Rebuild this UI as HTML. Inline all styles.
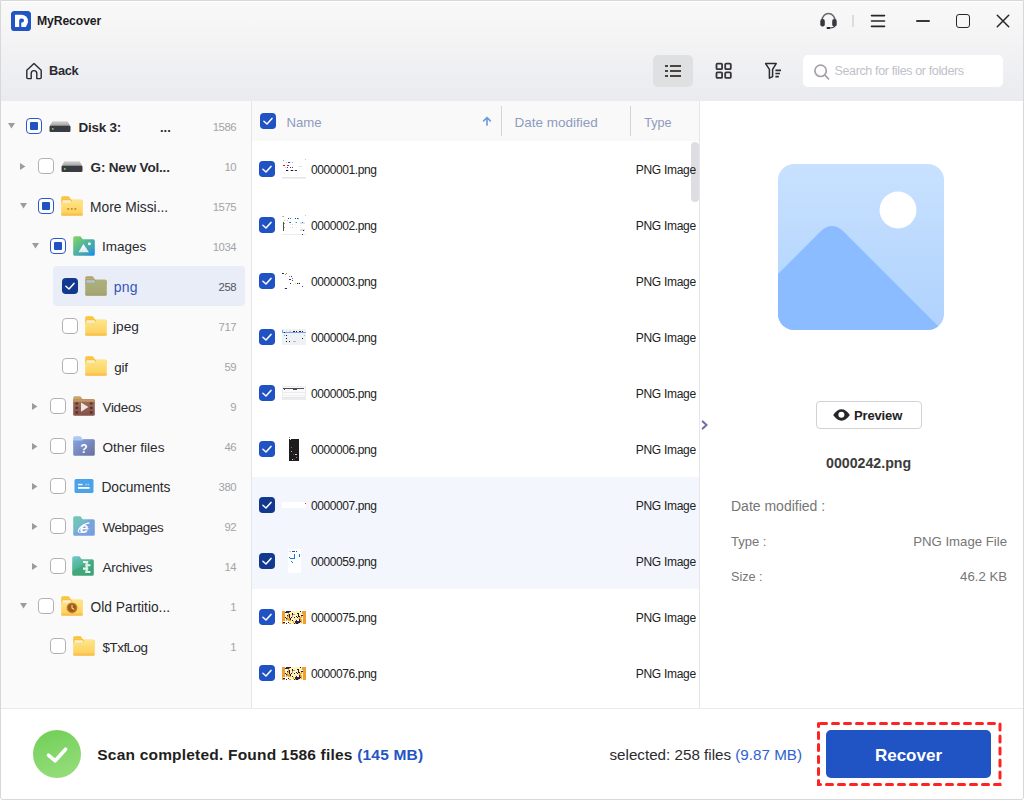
<!DOCTYPE html>
<html><head><meta charset="utf-8"><title>MyRecover</title>
<style>
*{box-sizing:border-box;margin:0;padding:0}
html,body{width:1024px;height:800px;overflow:hidden;background:#fff}
body{font-family:"Liberation Sans",sans-serif;color:#2b2b2b;position:relative}
.abs{position:absolute}
.t{position:absolute;white-space:nowrap;line-height:1}
#hdr{position:absolute;left:0;top:0;width:1024px;height:101px;background:linear-gradient(#f9f9f9 0px,#f4f4f5 35px,#eaebef 101px)}
#left{position:absolute;left:0;top:101px;width:252px;height:608px;background:#fafafa;border-right:1px solid #e6e5ea}
#mid{position:absolute;left:252px;top:101px;width:448px;height:608px;background:#fff;border-right:1px solid #e6e6ea}
#right{position:absolute;left:700px;top:101px;width:324px;height:608px;background:#fff}
#foot{position:absolute;left:0;top:708px;width:1024px;height:92px;background:#fff;border-top:1px solid #eaeaeb}
#win{position:absolute;left:0;top:0;width:1024px;height:800px;border:1px solid #d8d8da;border-radius:0 0 3px 3px;box-shadow:inset 0 1px 0 0 rgba(255,255,255,.9);pointer-events:none}
</style></head><body>
<div id="hdr">
<svg class="abs" style="left:11px;top:11px" width="20" height="20" viewBox="0 0 20 20"><path d="M3 0h14l3 3v14l-3 3H3l-3-3V3z" fill="#2154c5"/><rect width="20" height="20" rx="3.600" fill="#2154c5"/><path d="M4 3.800h6.700a6.200 6.200 0 0 1 6.200 6.200v1.600l-2 4.400H4z" fill="#fff"/><path d="M8.200 9.400a2 2 0 0 1 2-2h.800a2 2 0 0 1 2 2v.200a2 2 0 0 1-2 2h-.700v4.400H8.200z" fill="#2154c5"/></svg>
<div class="t" id="title" style="left:37px;top:14.67px;font-size:12.2px;color:#1c1c24;font-weight:bold;letter-spacing:-0.1px;">MyRecover</div>
<svg class="abs" style="left:25px;top:62px" width="18" height="18" viewBox="0 0 18 18" fill="none" stroke="#2a2a2e" stroke-width="1.400" stroke-linejoin="round"><path d="M1.800 8.200 9 1.600l7.200 6.600v7.400a1 1 0 0 1-1 1h-3.400v-5.200a2.800 2.800 0 0 0-5.600 0v5.200H2.800a1 1 0 0 1-1-1z"/></svg>
<div class="t" id="back" style="left:49px;top:64.76px;font-size:12.8px;color:#2a2a35;font-weight:bold;letter-spacing:-0.35px;">Back</div>
<svg class="abs" style="left:819.500px;top:12.100px" width="17" height="17" viewBox="0 0 17 17"><path d="M2.100 8.600A6.400 7.100 0 0 1 14.900 8.600" fill="none" stroke="#68686e" stroke-width="1.500"/><rect x=".300" y="6.900" width="4.500" height="7.600" rx="2" fill="#38383e"/><rect x="12.200" y="6.900" width="4.500" height="7.600" rx="2" fill="#38383e"/><path d="M14.600 13.800Q14.400 15.900 10 16" fill="none" stroke="#38383e" stroke-width="1.200"/><rect x="6.500" y="15" width="3.800" height="1.900" rx=".95" fill="#26262a"/></svg>
<div class="abs" style="left:852px;top:15px;width:2px;height:12px;background:#dcdcde"></div>
<svg class="abs" style="left:870px;top:14px" width="16" height="14" viewBox="0 0 16 14" stroke="#26262a" stroke-width="1.600" stroke-linecap="round"><path d="M1.500 1.600h13M1.500 7h13M1.500 12.400h13"/></svg>
<div class="abs" style="left:916px;top:19.900px;width:14px;height:1.900px;background:#36363c;border-radius:1px"></div>
<div class="abs" style="left:956px;top:14px;width:14px;height:14px;border:1.600px solid #26262a;border-radius:3px"></div>
<svg class="abs" style="left:996px;top:14px" width="14" height="14" viewBox="0 0 14 14" stroke="#26262a" stroke-width="1.500" stroke-linecap="round"><path d="M1.300 1.300l11.400 11.400M12.700 1.300 1.300 12.700"/></svg>
<div class="abs" style="left:653px;top:55px;width:40px;height:32px;border-radius:5px;background:#dfe0e2"></div>
<svg class="abs" style="left:665px;top:63px" width="18" height="16" viewBox="0 0 18 16" stroke="#48443e" stroke-width="2" shape-rendering="crispEdges"><path d="M0 3h3M5 3H16M0 8h3M5 8H16M0 13h3M5 13H16"/></svg>
<svg class="abs" style="left:714.500px;top:62.300px" width="18" height="18" viewBox="0 0 18 18" fill="none" stroke="#34343a" stroke-width="1.800"><rect x="1.500" y="1.600" width="5.600" height="5.600" rx="1"/><rect x="10.200" y="1.600" width="5.600" height="5.600" rx="1"/><rect x="1.500" y="10.300" width="5.600" height="5.600" rx="1"/><rect x="10.200" y="10.300" width="5.600" height="5.600" rx="1"/></svg>
<svg class="abs" style="left:764px;top:62.300px" width="20" height="18" viewBox="0 0 20 18" fill="none" stroke="#2c2c30" stroke-width="1.500" stroke-linejoin="round"><path d="M1.600 1.600h10.600L8.600 7.400v7.200l-3.200 1.600V7.400z"/><path d="M11.400 8.400h5.600M11.400 11.500h4.600M11.400 14.600h3.400" stroke-width="1.600"/></svg>
<div class="abs" style="left:803px;top:55px;width:200px;height:32px;border-radius:5px;background:#fff"></div>
<svg class="abs" style="left:813px;top:63px" width="18" height="18" viewBox="0 0 18 18" fill="none" stroke="#a99eab" stroke-width="1.700" stroke-linecap="round"><circle cx="7.600" cy="7.800" r="5.700"/><path d="M11.900 12.200l3.600 3.600"/></svg>
<div class="t" id="srch" style="left:834.5px;top:65.02px;font-size:12.5px;color:#c0c1c9;letter-spacing:-0.36px;">Search for files or folders</div>
</div>
<div id="left">
<div class="abs" style="left:53px;top:165px;width:192px;height:40px;border-radius:4px;background:#e8edf7"></div>
<svg class="abs" style="left:7.699999999999999px;top:22.2px" width="7" height="6" viewBox="0 0 7 6"><path d="M0 0h7L3.500 5.600z" fill="#9c9c9c"/></svg>
<div class="abs" style="left:26px;top:17.0px;width:16px;height:16px;border:1.400px solid #2a59c6;border-radius:4px;background:#fff"><div style="position:absolute;left:2.600px;top:2.600px;right:2.600px;bottom:2.600px;background:#2152c4;border-radius:1px"></div></div>
<svg class="abs" style="left:49px;top:20px" width="22" height="12" viewBox="0 0 22 12"><defs><linearGradient id="dk4925" x1="0" y1="0" x2="0" y2="1"><stop offset="0" stop-color="#d6d6d6"/><stop offset="1" stop-color="#9c9c9c"/></linearGradient></defs><path d="M3.400 .2h15.200l2.800 5H.600z" fill="url(#dk4925)"/><rect x=".5" y="4.800" width="21" height="6.200" rx="1.200" fill="#3c3c3e"/><rect x="5.600" y="7.400" width="13" height="1" fill="#34346a" opacity=".8"/><circle cx="3.800" cy="7.900" r=".9" fill="#7be050"/></svg>
<div class="t" id="tl0" style="left:78.6px;top:19.57px;font-size:13.5px;color:#2a2a2e;font-weight:bold;letter-spacing:-0.26px;">Disk 3:</div>
<div class="t" id="tc0" style="right:14.799999999999999px;top:21.33px;font-size:11.3px;color:#a3a3a8;letter-spacing:-0.4px;">1586</div>
<svg class="abs" style="left:20.2px;top:61.5px" width="6" height="7" viewBox="0 0 6 7"><path d="M0 0v7L5.400 3.500z" fill="#9c9c9c"/></svg>
<div class="abs" style="left:38px;top:57.0px;width:16px;height:16px;border:1.200px solid #b3b1b5;border-radius:4px;background:#fff"></div>
<svg class="abs" style="left:61px;top:60px" width="22" height="12" viewBox="0 0 22 12"><defs><linearGradient id="dk6165" x1="0" y1="0" x2="0" y2="1"><stop offset="0" stop-color="#d6d6d6"/><stop offset="1" stop-color="#9c9c9c"/></linearGradient></defs><path d="M3.400 .2h15.200l2.800 5H.600z" fill="url(#dk6165)"/><rect x=".5" y="4.800" width="21" height="6.200" rx="1.200" fill="#3c3c3e"/><rect x="5.600" y="7.400" width="13" height="1" fill="#34346a" opacity=".8"/><circle cx="3.800" cy="7.900" r=".9" fill="#7be050"/></svg>
<div class="t" id="tl1" style="left:90.6px;top:59.57px;font-size:13.5px;color:#2a2a2e;font-weight:bold;letter-spacing:-0.18px;">G: New Vol...</div>
<div class="t" id="tc1" style="right:14.799999999999999px;top:61.33px;font-size:11.3px;color:#a3a3a8;letter-spacing:-0.4px;">10</div>
<svg class="abs" style="left:19.5px;top:102.2px" width="7" height="6" viewBox="0 0 7 6"><path d="M0 0h7L3.500 5.600z" fill="#9c9c9c"/></svg>
<div class="abs" style="left:38px;top:97.0px;width:16px;height:16px;border:1.400px solid #2a59c6;border-radius:4px;background:#fff"><div style="position:absolute;left:2.600px;top:2.600px;right:2.600px;bottom:2.600px;background:#2152c4;border-radius:1px"></div></div>
<svg class="abs" style="left:61px;top:95px" width="22" height="20" viewBox="0 0 22 20"><defs><linearGradient id="fg1" x1="0" y1="0" x2="0" y2="1"><stop offset="0" stop-color="#ffe68c"/><stop offset="1" stop-color="#fbcd55"/></linearGradient></defs><path d="M.2 1.800A1.600 1.600 0 0 1 1.800 .2h5.800l2 2.600H.2z" fill="#fbc12f"/><path d="M.2 2.800h9.400l.9 1h9.700a1.600 1.600 0 0 1 1.600 1.600v3H.2z" fill="#fbc12f"/><rect x="1.400" y="4.200" width="8.400" height="3" rx=".6" fill="#f6efdc"/><path d="M.2 6.400h9.800l1.200-2.600h9a1.600 1.600 0 0 1 1.600 1.600v12.800a1.600 1.600 0 0 1-1.600 1.600H1.800a1.600 1.600 0 0 1-1.600-1.600z" fill="url(#fg1)"/><path d="M.2 18.200a1.600 1.600 0 0 0 1.600 1.600h18.400a1.600 1.600 0 0 0 1.600-1.600v-.6H.2z" fill="#f5b545" opacity=".55"/><rect x="6.200" y="12" width="1.900" height="1.700" rx=".5" fill="#cf8526"/><rect x="9.800" y="12" width="1.900" height="1.700" rx=".5" fill="#cf8526"/><rect x="13.400" y="12" width="1.900" height="1.700" rx=".5" fill="#cf8526"/></svg>
<div class="t" id="tl2" style="left:90px;top:99.82px;font-size:13.8px;color:#2a2a2e;">More Missi...</div>
<div class="t" id="tc2" style="right:14.799999999999999px;top:101.33px;font-size:11.3px;color:#a3a3a8;letter-spacing:-0.4px;">1575</div>
<svg class="abs" style="left:31.700000000000003px;top:142.2px" width="7" height="6" viewBox="0 0 7 6"><path d="M0 0h7L3.500 5.600z" fill="#9c9c9c"/></svg>
<div class="abs" style="left:50px;top:137.0px;width:16px;height:16px;border:1.400px solid #2a59c6;border-radius:4px;background:#fff"><div style="position:absolute;left:2.600px;top:2.600px;right:2.600px;bottom:2.600px;background:#2152c4;border-radius:1px"></div></div>
<svg class="abs" style="left:73px;top:135px" width="22" height="20" viewBox="0 0 22 20"><defs><linearGradient id="gi" x1="0" y1="0" x2="1" y2="1"><stop offset="0" stop-color="#8ad65a"/><stop offset=".45" stop-color="#50b69a"/><stop offset=".75" stop-color="#3fa0b8"/><stop offset=".9" stop-color="#2290ea"/><stop offset="1" stop-color="#1e8cf0"/></linearGradient><linearGradient id="gm" x1="0" y1="0" x2="0" y2="1"><stop offset="0" stop-color="#ffffff"/><stop offset="1" stop-color="#dfe8f4"/></linearGradient></defs><path d="M.200 1.800A1.600 1.600 0 0 1 1.800 .2h5.600l2.300 3h10.500a1.600 1.600 0 0 1 1.600 1.600v13.400a1.600 1.600 0 0 1-1.600 1.600H1.800a1.600 1.600 0 0 1-1.600-1.600z" fill="url(#gi)"/><path d="M5.400 16.200l5-8.200 5.600 8.200z" fill="url(#gm)"/><circle cx="16.400" cy="7.800" r="1.500" fill="#f4fbff"/></svg>
<div class="t" id="tl3" style="left:102px;top:138.87px;font-size:13.5px;color:#2a2a2e;">Images</div>
<div class="t" id="tc3" style="right:14.799999999999999px;top:141.33px;font-size:11.3px;color:#a3a3a8;letter-spacing:-0.4px;">1034</div>
<svg class="abs" style="left:62px;top:177.0px" width="16" height="16" viewBox="0 0 16 16"><rect width="16" height="16" rx="3.800" fill="#12398f"/><path d="M3.900 8.300l3.100 2.700 5-5.600" fill="none" stroke="#fff" stroke-width="1.500" stroke-linecap="round" stroke-linejoin="round"/></svg>
<svg class="abs" style="left:85px;top:175px" width="22" height="20" viewBox="0 0 22 20"><defs><linearGradient id="fg2" x1="0" y1="0" x2="0" y2="1"><stop offset="0" stop-color="#aeb07c"/><stop offset="1" stop-color="#a3a574"/></linearGradient></defs><path d="M.2 1.800A1.600 1.600 0 0 1 1.800 .2h5.800l2 2.600H.2z" fill="#b59f6c"/><path d="M.2 2.800h9.400l.9 1h9.700a1.600 1.600 0 0 1 1.600 1.600v3H.2z" fill="#b59f6c"/><rect x="1.400" y="4.200" width="8.400" height="3" rx=".6" fill="#a9c8e6"/><path d="M.2 6.400h9.800l1.200-2.600h9a1.600 1.600 0 0 1 1.600 1.600v12.800a1.600 1.600 0 0 1-1.600 1.600H1.800a1.600 1.600 0 0 1-1.600-1.600z" fill="url(#fg2)"/><path d="M.2 18.200a1.600 1.600 0 0 0 1.600 1.600h18.400a1.600 1.600 0 0 0 1.600-1.600v-.6H.2z" fill="#a89a6c" opacity=".55"/></svg>
<div class="t" id="tl4" style="left:113.7px;top:178.65px;font-size:14px;color:#3457b9;letter-spacing:0.2px;">png</div>
<div class="t" id="tc4" style="right:14.799999999999999px;top:181.33px;font-size:11.3px;color:#55565c;letter-spacing:-0.4px;">258</div>
<div class="abs" style="left:62px;top:217.0px;width:16px;height:16px;border:1.200px solid #b3b1b5;border-radius:4px;background:#fff"></div>
<svg class="abs" style="left:85px;top:215px" width="22" height="20" viewBox="0 0 22 20"><defs><linearGradient id="fg3" x1="0" y1="0" x2="0" y2="1"><stop offset="0" stop-color="#ffe68c"/><stop offset="1" stop-color="#fbcd55"/></linearGradient></defs><path d="M.2 1.800A1.600 1.600 0 0 1 1.800 .2h5.800l2 2.600H.2z" fill="#fbc12f"/><path d="M.2 2.800h9.400l.9 1h9.700a1.600 1.600 0 0 1 1.600 1.600v3H.2z" fill="#fbc12f"/><rect x="1.400" y="4.200" width="8.400" height="3" rx=".6" fill="#f6efdc"/><path d="M.2 6.400h9.800l1.200-2.600h9a1.600 1.600 0 0 1 1.600 1.600v12.800a1.600 1.600 0 0 1-1.600 1.600H1.800a1.600 1.600 0 0 1-1.600-1.600z" fill="url(#fg3)"/><path d="M.2 18.200a1.600 1.600 0 0 0 1.600 1.600h18.400a1.600 1.600 0 0 0 1.600-1.600v-.6H.2z" fill="#f5b545" opacity=".55"/></svg>
<div class="t" id="tl5" style="left:113px;top:218.90px;font-size:13.7px;color:#2a2a2e;">jpeg</div>
<div class="t" id="tc5" style="right:14.799999999999999px;top:221.33px;font-size:11.3px;color:#a3a3a8;letter-spacing:-0.4px;">717</div>
<div class="abs" style="left:62px;top:257.0px;width:16px;height:16px;border:1.200px solid #b3b1b5;border-radius:4px;background:#fff"></div>
<svg class="abs" style="left:85px;top:255px" width="22" height="20" viewBox="0 0 22 20"><defs><linearGradient id="fg4" x1="0" y1="0" x2="0" y2="1"><stop offset="0" stop-color="#ffe68c"/><stop offset="1" stop-color="#fbcd55"/></linearGradient></defs><path d="M.2 1.800A1.600 1.600 0 0 1 1.800 .2h5.800l2 2.600H.2z" fill="#fbc12f"/><path d="M.2 2.800h9.400l.9 1h9.700a1.600 1.600 0 0 1 1.600 1.600v3H.2z" fill="#fbc12f"/><rect x="1.400" y="4.200" width="8.400" height="3" rx=".6" fill="#f6efdc"/><path d="M.2 6.400h9.800l1.200-2.600h9a1.600 1.600 0 0 1 1.600 1.600v12.800a1.600 1.600 0 0 1-1.600 1.600H1.800a1.600 1.600 0 0 1-1.600-1.600z" fill="url(#fg4)"/><path d="M.2 18.200a1.600 1.600 0 0 0 1.600 1.600h18.400a1.600 1.600 0 0 0 1.600-1.600v-.6H.2z" fill="#f5b545" opacity=".55"/></svg>
<div class="t" id="tl6" style="left:114.3px;top:260.16px;font-size:13.4px;color:#2a2a2e;letter-spacing:-0.2px;">gif</div>
<div class="t" id="tc6" style="right:14.799999999999999px;top:261.33px;font-size:11.3px;color:#a3a3a8;letter-spacing:-0.4px;">59</div>
<svg class="abs" style="left:32.3px;top:301.5px" width="6" height="7" viewBox="0 0 6 7"><path d="M0 0v7L5.400 3.500z" fill="#9c9c9c"/></svg>
<div class="abs" style="left:50px;top:297.0px;width:16px;height:16px;border:1.200px solid #b3b1b5;border-radius:4px;background:#fff"></div>
<svg class="abs" style="left:73px;top:295px" width="22" height="20" viewBox="0 0 22 20"><defs><linearGradient id="gv" x1="0" y1="0" x2="0" y2="1"><stop offset="0" stop-color="#a3705c"/><stop offset="1" stop-color="#84504a"/></linearGradient></defs><path d="M.200 1.800A1.600 1.600 0 0 1 1.800 .2h5.600l2.300 3h10.500a1.600 1.600 0 0 1 1.600 1.600v4H.2z" fill="#c8a668"/><rect x=".2" y="3.200" width="21.600" height="16.600" rx="1.600" fill="url(#gv)"/><path d="M.2 3.200h20a1.600 1.600 0 0 1 1.600 1.600v1H.2z" fill="#c09a64"/><path d="M2.400 6.400h2.800v2.200H2.400zM2.400 10.800h2.800V13H2.400zM2.400 15.200h2.800v2.200H2.400zM16.800 6.400h2.800v2.200h-2.800zM16.800 10.800h2.800V13h-2.800zM16.800 15.200h2.800v2.200h-2.800z" fill="#53352f"/><path d="M8 6.400v9.400l7.400-4.700z" fill="#efe6e0"/></svg>
<div class="t" id="tl7" style="left:102.5px;top:300.16px;font-size:13.4px;color:#2a2a2e;letter-spacing:-0.28px;">Videos</div>
<div class="t" id="tc7" style="right:14.799999999999999px;top:301.33px;font-size:11.3px;color:#a3a3a8;letter-spacing:-0.4px;">9</div>
<svg class="abs" style="left:32.3px;top:341.5px" width="6" height="7" viewBox="0 0 6 7"><path d="M0 0v7L5.400 3.500z" fill="#9c9c9c"/></svg>
<div class="abs" style="left:50px;top:337.0px;width:16px;height:16px;border:1.200px solid #b3b1b5;border-radius:4px;background:#fff"></div>
<svg class="abs" style="left:73px;top:335px" width="22" height="20" viewBox="0 0 22 20"><defs><linearGradient id="go" x1="0" y1="0" x2="1" y2="1"><stop offset="0" stop-color="#86a6e0"/><stop offset=".55" stop-color="#7686bd"/><stop offset="1" stop-color="#6b6f9c"/></linearGradient></defs><path d="M.200 1.800A1.600 1.600 0 0 1 1.800 .2h5.600l2.300 3h10.500a1.600 1.600 0 0 1 1.600 1.600v4H.2z" fill="#a9c8f2"/><path d="M.2 4.400h9.200l1-1.200h9.800a1.600 1.600 0 0 1 1.600 1.600v13.400a1.600 1.600 0 0 1-1.600 1.600H1.800a1.600 1.600 0 0 1-1.600-1.600z" fill="url(#go)"/><text x="11" y="16.600" font-family="Liberation Sans" font-weight="bold" font-size="12" fill="#fff" text-anchor="middle">?</text></svg>
<div class="t" id="tl8" style="left:102.5px;top:339.99px;font-size:13.6px;color:#2a2a2e;">Other files</div>
<div class="t" id="tc8" style="right:14.799999999999999px;top:341.33px;font-size:11.3px;color:#a3a3a8;letter-spacing:-0.4px;">46</div>
<svg class="abs" style="left:32.3px;top:381.5px" width="6" height="7" viewBox="0 0 6 7"><path d="M0 0v7L5.400 3.500z" fill="#9c9c9c"/></svg>
<div class="abs" style="left:50px;top:377.0px;width:16px;height:16px;border:1.200px solid #b3b1b5;border-radius:4px;background:#fff"></div>
<svg class="abs" style="left:73px;top:375px" width="22" height="20" viewBox="0 0 22 20"><rect x="1.500" y="3" width="19" height="14" rx="1.600" fill="#49a2ea"/><rect x="5" y="7.800" width="4.600" height="1.500" fill="#eef7ff"/><rect x="12.400" y="7.800" width="1.200" height="1.500" fill="#bfe0fb"/><rect x="14.600" y="7.800" width="1.200" height="1.500" fill="#bfe0fb"/><rect x="5" y="11" width="11.600" height="1.800" fill="#fff"/></svg>
<div class="t" id="tl9" style="left:101.5px;top:379.82px;font-size:13.8px;color:#2a2a2e;letter-spacing:-0.1px;">Documents</div>
<div class="t" id="tc9" style="right:14.799999999999999px;top:381.33px;font-size:11.3px;color:#a3a3a8;letter-spacing:-0.4px;">380</div>
<svg class="abs" style="left:32.3px;top:421.5px" width="6" height="7" viewBox="0 0 6 7"><path d="M0 0v7L5.400 3.500z" fill="#9c9c9c"/></svg>
<div class="abs" style="left:50px;top:417.0px;width:16px;height:16px;border:1.200px solid #b3b1b5;border-radius:4px;background:#fff"></div>
<svg class="abs" style="left:73px;top:415px" width="22" height="20" viewBox="0 0 22 20"><defs><linearGradient id="gw" x1="0" y1="0" x2="1" y2="1"><stop offset="0" stop-color="#6fc9b6"/><stop offset=".38" stop-color="#74bcc4"/><stop offset=".5" stop-color="#7aa4dc"/><stop offset="1" stop-color="#769ee0"/></linearGradient></defs><path d="M.200 1.800A1.600 1.600 0 0 1 1.800 .2h5.600l2.300 3h10.500a1.600 1.600 0 0 1 1.600 1.600v13.400a1.600 1.600 0 0 1-1.600 1.600H1.800a1.600 1.600 0 0 1-1.600-1.600z" fill="url(#gw)"/><text x="10.800" y="16.600" font-family="Liberation Sans" font-style="italic" font-weight="bold" font-size="15" fill="#fff" text-anchor="middle">e</text><path d="M5.600 16.200c-1.800-1.600 3.600-8.600 10.800-9.400" stroke="#fff" stroke-width="1.200" fill="none"/><path d="M6 16.400c2 1 7.600-.6 10-4" stroke="#fff" stroke-width=".9" fill="none" opacity=".8"/></svg>
<div class="t" id="tl10" style="left:102.5px;top:420.16px;font-size:13.4px;color:#2a2a2e;letter-spacing:-0.37px;">Webpages</div>
<div class="t" id="tc10" style="right:14.799999999999999px;top:421.33px;font-size:11.3px;color:#a3a3a8;letter-spacing:-0.4px;">92</div>
<svg class="abs" style="left:32.3px;top:461.5px" width="6" height="7" viewBox="0 0 6 7"><path d="M0 0v7L5.400 3.500z" fill="#9c9c9c"/></svg>
<div class="abs" style="left:50px;top:457.0px;width:16px;height:16px;border:1.200px solid #b3b1b5;border-radius:4px;background:#fff"></div>
<svg class="abs" style="left:72px;top:455px" width="22" height="20" viewBox="0 0 22 20"><defs><linearGradient id="ga" x1="0" y1="0" x2=".6" y2="1"><stop offset="0" stop-color="#78c8dc"/><stop offset=".3" stop-color="#5cbcaa"/><stop offset=".55" stop-color="#4eb692"/><stop offset=".56" stop-color="#44aa7e"/><stop offset="1" stop-color="#3ea477"/></linearGradient></defs><path d="M.200 1.800A1.600 1.600 0 0 1 1.800 .2h5.600l2.300 3h10.500a1.600 1.600 0 0 1 1.600 1.600v13.400a1.600 1.600 0 0 1-1.600 1.600H1.800a1.600 1.600 0 0 1-1.600-1.600z" fill="url(#ga)"/><path d="M11 4.900h5.200v2h-5.200zM13.400 8.200h5v2.100h-5zM11 11.600h5.200v2.100h-5.200zM13.400 15h5v2.100h-5z" fill="#f2f8f5"/><rect x="13.600" y="5" width="2.200" height="12" fill="#d8efe6"/></svg>
<div class="t" id="tl11" style="left:102.5px;top:460.16px;font-size:13.4px;color:#2a2a2e;letter-spacing:-0.2px;">Archives</div>
<div class="t" id="tc11" style="right:14.799999999999999px;top:461.33px;font-size:11.3px;color:#a3a3a8;letter-spacing:-0.4px;">14</div>
<svg class="abs" style="left:19.5px;top:502.2px" width="7" height="6" viewBox="0 0 7 6"><path d="M0 0h7L3.500 5.600z" fill="#9c9c9c"/></svg>
<div class="abs" style="left:38px;top:497.0px;width:16px;height:16px;border:1.200px solid #b3b1b5;border-radius:4px;background:#fff"></div>
<svg class="abs" style="left:61px;top:495px" width="22" height="20" viewBox="0 0 22 20"><defs><linearGradient id="fg5" x1="0" y1="0" x2="0" y2="1"><stop offset="0" stop-color="#ffe68c"/><stop offset="1" stop-color="#fbcd55"/></linearGradient></defs><path d="M.2 1.800A1.600 1.600 0 0 1 1.800 .2h5.800l2 2.600H.2z" fill="#fbc12f"/><path d="M.2 2.800h9.400l.9 1h9.700a1.600 1.600 0 0 1 1.600 1.600v3H.2z" fill="#fbc12f"/><rect x="1.400" y="4.200" width="8.400" height="3" rx=".6" fill="#f6efdc"/><path d="M.2 6.400h9.800l1.200-2.600h9a1.600 1.600 0 0 1 1.600 1.600v12.800a1.600 1.600 0 0 1-1.600 1.600H1.800a1.600 1.600 0 0 1-1.600-1.600z" fill="url(#fg5)"/><path d="M.2 18.200a1.600 1.600 0 0 0 1.600 1.600h18.400a1.600 1.600 0 0 0 1.600-1.600v-.6H.2z" fill="#f5b545" opacity=".55"/><circle cx="11" cy="11.800" r="5.400" fill="#c07a2c"/><circle cx="11" cy="11.800" r="3.900" fill="#9a5a1c"/><path d="M11 9.300v2.700l1.800 1.200" stroke="#ffd978" stroke-width="1.200" fill="none" stroke-linecap="round"/></svg>
<div class="t" id="tl12" style="left:90.6px;top:499.86px;font-size:13.75px;color:#2a2a2e;">Old Partitio...</div>
<div class="t" id="tc12" style="right:14.799999999999999px;top:501.33px;font-size:11.3px;color:#a3a3a8;letter-spacing:-0.4px;">1</div>
<div class="abs" style="left:50px;top:537.0px;width:16px;height:16px;border:1.200px solid #b3b1b5;border-radius:4px;background:#fff"></div>
<svg class="abs" style="left:73px;top:535px" width="22" height="20" viewBox="0 0 22 20"><defs><linearGradient id="fg6" x1="0" y1="0" x2="0" y2="1"><stop offset="0" stop-color="#ffe68c"/><stop offset="1" stop-color="#fbcd55"/></linearGradient></defs><path d="M.2 1.800A1.600 1.600 0 0 1 1.800 .2h5.800l2 2.600H.2z" fill="#fbc12f"/><path d="M.2 2.800h9.400l.9 1h9.700a1.600 1.600 0 0 1 1.600 1.600v3H.2z" fill="#fbc12f"/><rect x="1.400" y="4.200" width="8.400" height="3" rx=".6" fill="#f6efdc"/><path d="M.2 6.400h9.800l1.200-2.600h9a1.600 1.600 0 0 1 1.600 1.600v12.800a1.600 1.600 0 0 1-1.600 1.600H1.800a1.600 1.600 0 0 1-1.600-1.600z" fill="url(#fg6)"/><path d="M.2 18.200a1.600 1.600 0 0 0 1.600 1.600h18.400a1.600 1.600 0 0 0 1.600-1.600v-.6H.2z" fill="#f5b545" opacity=".55"/></svg>
<div class="t" id="tl13" style="left:102.5px;top:540.16px;font-size:13.4px;color:#2a2a2e;letter-spacing:-0.48px;">$TxfLog</div>
<div class="t" id="tc13" style="right:14.799999999999999px;top:541.33px;font-size:11.3px;color:#a3a3a8;letter-spacing:-0.4px;">1</div>
<div class="t" id="dots" style="left:160px;top:20.00px;font-size:13px;color:#2a2a2e;font-weight:bold;">...</div>
</div>
<div id="mid">
<div class="abs" style="left:0;top:0;width:447px;height:40px;background:#f9f9fa"></div>
<div class="abs" style="left:0;top:376px;width:447px;height:112px;background:#f3f6fd"></div>
<svg class="abs" style="left:8px;top:12.0px" width="16" height="16" viewBox="0 0 16 16"><rect width="16" height="16" rx="3.800" fill="#2152c4"/><path d="M3.900 8.300l3.100 2.700 5-5.600" fill="none" stroke="#fff" stroke-width="1.500" stroke-linecap="round" stroke-linejoin="round"/></svg>
<div class="t" id="hname" style="left:34.5px;top:14.83px;font-size:13.2px;color:#8f9bbd;">Name</div>
<svg class="abs" style="left:230px;top:15px" width="10" height="11" viewBox="0 0 10 11" fill="none" stroke="#6f9de0" stroke-width="1.700" stroke-linecap="round" stroke-linejoin="round"><path d="M5 9V1.800M1.700 4.800 5 1.500l3.300 3.300"/></svg>
<div class="abs" style="left:249px;top:5px;width:1px;height:30px;background:#d3d3d8"></div>
<div class="t" id="hdate" style="left:262.4px;top:14.57px;font-size:13.5px;color:#8f9bbd;">Date modified</div>
<div class="abs" style="left:378px;top:5px;width:1px;height:30px;background:#d3d3d8"></div>
<div class="t" id="htype" style="left:392.29999999999995px;top:15.93px;font-size:12.6px;color:#8f9bbd;">Type</div>
<div class="abs" style="left:439px;top:41px;width:8px;height:59.500px;border-radius:4px;background:#dedee2"></div>
<svg class="abs" style="left:7px;top:60.0px" width="16" height="16" viewBox="0 0 16 16"><rect width="16" height="16" rx="3.800" fill="#2152c4"/><path d="M3.900 8.300l3.100 2.700 5-5.600" fill="none" stroke="#fff" stroke-width="1.500" stroke-linecap="round" stroke-linejoin="round"/></svg>
<svg class="abs" style="left:30px;top:57px" width="24" height="22" viewBox="0 0 24 22" shape-rendering="crispEdges"><rect x="1" y="2" width="1" height="1" fill="#80d040"/><rect x="23" y="1" width="1" height="1" fill="#c8c8c8"/><rect x="4" y="4" width="1" height="1" fill="#ffc8c8"/><rect x="5.5" y="4" width="2" height="1" fill="#2050d0"/><rect x="8" y="4" width="1" height="1" fill="#c0f0ff"/><rect x="10" y="4" width="1" height="1" fill="#b0a0d0"/><rect x="1" y="7" width="2" height="1" fill="#ff1010"/><rect x="5" y="7" width="2" height="1" fill="#ff1010"/><rect x="17" y="8" width="3" height="1" fill="#e2e2e2"/><rect x="3" y="9" width="1" height="1" fill="#a0d8ff"/><rect x="5" y="9" width="1" height="1" fill="#303090"/><rect x="8" y="9" width="1" height="1" fill="#602020"/><rect x="10" y="9" width="1" height="1" fill="#3050a0"/><rect x="4" y="12" width="2" height="1" fill="#181818"/><rect x="6" y="12" width="1" height="1" fill="#ffc080"/><rect x="8" y="12" width="1" height="1" fill="#a0e0ff"/><rect x="9" y="12" width="2" height="1" fill="#181818"/><rect x="11" y="12" width="1" height="1" fill="#a0e0ff"/><rect x="12" y="12" width="1" height="1" fill="#ffc080"/><rect x="13" y="12" width="1.5" height="1" fill="#303080"/><rect x="0" y="19" width="24" height="1" fill="#e6e6e8"/><rect x="0" y="20" width="24" height="1" fill="#f0f0f2"/></svg>
<div class="t" id="fn0" style="left:59px;top:63.04px;font-size:12px;color:#222;letter-spacing:-0.42px;">0000001.png</div>
<div class="t" id="ft0" style="left:383.79999999999995px;top:63.04px;font-size:12px;color:#222;letter-spacing:-0.3px;width:61.400px;overflow:hidden;padding-bottom:4px;">PNG Image File</div>
<svg class="abs" style="left:7px;top:116.0px" width="16" height="16" viewBox="0 0 16 16"><rect width="16" height="16" rx="3.800" fill="#2152c4"/><path d="M3.900 8.300l3.100 2.700 5-5.600" fill="none" stroke="#fff" stroke-width="1.500" stroke-linecap="round" stroke-linejoin="round"/></svg>
<svg class="abs" style="left:30px;top:113px" width="24" height="22" viewBox="0 0 24 22" shape-rendering="crispEdges"><rect x="0" y="2" width="1" height="1" fill="#d0c0d8"/><rect x="1" y="2" width="1" height="1" fill="#70d040"/><rect x="23" y="1" width="1" height="1" fill="#c8c8c8"/><rect x="6" y="4" width="1" height="1" fill="#283890"/><rect x="8" y="4" width="1" height="1" fill="#2080e8"/><rect x="10" y="4" width="1" height="1" fill="#ffe0c8"/><rect x="13" y="4" width="1" height="1" fill="#283890"/><rect x="15" y="4" width="1" height="1" fill="#1850c0"/><rect x="16" y="4" width="1" height="1" fill="#60a8f8"/><rect x="2" y="6" width="1" height="1" fill="#a0d8ff"/><rect x="3" y="6" width="1" height="1" fill="#ffe8d0"/><rect x="5" y="6" width="1" height="1" fill="#a0d8ff"/><rect x="1" y="8" width="1" height="9" fill="#505058"/><rect x="2" y="9" width="1" height="1" fill="#e08820"/><rect x="2" y="13" width="1" height="1" fill="#f0a030"/><rect x="7" y="8" width="1" height="1" fill="#3090f0"/><rect x="8" y="8" width="1" height="1" fill="#905060"/><rect x="13" y="8" width="1" height="1" fill="#a0f0e0"/><rect x="14" y="8" width="1" height="1" fill="#30b080"/><rect x="18" y="8" width="5" height="2" fill="#e6e6ea"/><rect x="20" y="8" width="1" height="1" fill="#3070d0"/><rect x="7" y="10" width="1" height="1" fill="#fff4c0"/><rect x="10" y="10" width="1" height="1" fill="#d4d4d4"/><rect x="13" y="10" width="1" height="1" fill="#fff4c0"/><rect x="8" y="13" width="1" height="1" fill="#d8e4ff"/><rect x="10" y="13" width="1" height="1" fill="#d4d4d4"/><rect x="14" y="13" width="1" height="1" fill="#d8e4ff"/><rect x="18" y="15" width="5" height="2" fill="#e2e2e2"/><rect x="19" y="16" width="1" height="1" fill="#ffd8a0"/><rect x="21" y="16" width="1" height="1" fill="#202020"/><rect x="0" y="20" width="24" height="1" fill="#ececf0"/><rect x="20" y="20" width="1" height="1" fill="#802080"/></svg>
<div class="t" id="fn1" style="left:59px;top:119.04px;font-size:12px;color:#222;letter-spacing:-0.42px;">0000002.png</div>
<div class="t" id="ft1" style="left:383.79999999999995px;top:119.04px;font-size:12px;color:#222;letter-spacing:-0.3px;width:61.400px;overflow:hidden;padding-bottom:4px;">PNG Image File</div>
<svg class="abs" style="left:7px;top:172.0px" width="16" height="16" viewBox="0 0 16 16"><rect width="16" height="16" rx="3.800" fill="#2152c4"/><path d="M3.900 8.300l3.100 2.700 5-5.600" fill="none" stroke="#fff" stroke-width="1.500" stroke-linecap="round" stroke-linejoin="round"/></svg>
<svg class="abs" style="left:30px;top:169px" width="24" height="22" viewBox="0 0 24 22" shape-rendering="crispEdges"><rect x="0" y="3" width="2" height="1" fill="#303030"/><rect x="3" y="4" width="1" height="1" fill="#909090"/><rect x="4" y="3" width="1" height="1" fill="#d08020"/><rect x="7" y="6" width="1" height="1" fill="#b08890"/><rect x="9" y="6" width="1" height="1" fill="#1040b0"/><rect x="10" y="8" width="1" height="1" fill="#2090f0"/><rect x="7" y="9" width="1.5" height="1" fill="#404040"/><rect x="10" y="10" width="1" height="1" fill="#804040"/><rect x="8" y="13" width="1" height="1" fill="#302080"/><rect x="11" y="14" width="1" height="1" fill="#ffe0c8"/><rect x="13" y="13" width="1" height="1" fill="#ffd080"/><rect x="15" y="13" width="1" height="1" fill="#181818"/><rect x="16" y="13" width="1" height="1" fill="#ffd080"/><rect x="17" y="13" width="1" height="1" fill="#181818"/><rect x="17" y="16" width="1" height="1" fill="#d8f8ff"/><rect x="20" y="16" width="1" height="1" fill="#2050d0"/><rect x="2" y="18" width="1" height="1" fill="#ffd890"/><rect x="3" y="18" width="1.5" height="1" fill="#302070"/></svg>
<div class="t" id="fn2" style="left:59px;top:175.04px;font-size:12px;color:#222;letter-spacing:-0.42px;">0000003.png</div>
<div class="t" id="ft2" style="left:383.79999999999995px;top:175.04px;font-size:12px;color:#222;letter-spacing:-0.3px;width:61.400px;overflow:hidden;padding-bottom:4px;">PNG Image File</div>
<svg class="abs" style="left:7px;top:228.0px" width="16" height="16" viewBox="0 0 16 16"><rect width="16" height="16" rx="3.800" fill="#2152c4"/><path d="M3.900 8.300l3.100 2.700 5-5.600" fill="none" stroke="#fff" stroke-width="1.500" stroke-linecap="round" stroke-linejoin="round"/></svg>
<svg class="abs" style="left:30px;top:228px" width="24" height="16" viewBox="0 0 24 16" shape-rendering="crispEdges"><rect x="0" y="0" width="24" height="16" fill="#eef1f6"/><rect x="0" y="1" width="1" height="3" fill="#70a0e8"/><rect x="0" y="3" width="24" height="1" fill="#78a6ea"/><rect x="2" y="3" width="1" height="1" fill="#202060"/><rect x="4" y="2" width="1" height="1" fill="#c8c8c8"/><rect x="7" y="2" width="2" height="1" fill="#c8c8c8"/><rect x="11" y="2" width="2" height="1" fill="#202020"/><rect x="14" y="2" width="1" height="1" fill="#202020"/><rect x="16.5" y="2" width="2" height="1" fill="#202050"/><rect x="20" y="2" width="1" height="1" fill="#202020"/><rect x="2" y="6" width="1" height="1" fill="#a0a0a0"/><rect x="4" y="6" width="1" height="1" fill="#181818"/><rect x="22" y="6" width="1" height="1" fill="#c0c0c0"/><rect x="4" y="9" width="1" height="1" fill="#181818"/><rect x="18" y="9" width="1" height="1" fill="#fff8b0"/><rect x="20" y="9" width="1" height="1" fill="#181818"/><rect x="4" y="12" width="1" height="1" fill="#181818"/><rect x="7" y="12" width="1" height="1" fill="#181818"/><rect x="11" y="12" width="2.5" height="1" fill="#b8b8b8"/></svg>
<div class="t" id="fn3" style="left:59px;top:231.04px;font-size:12px;color:#222;letter-spacing:-0.42px;">0000004.png</div>
<div class="t" id="ft3" style="left:383.79999999999995px;top:231.04px;font-size:12px;color:#222;letter-spacing:-0.3px;width:61.400px;overflow:hidden;padding-bottom:4px;">PNG Image File</div>
<svg class="abs" style="left:7px;top:284.0px" width="16" height="16" viewBox="0 0 16 16"><rect width="16" height="16" rx="3.800" fill="#2152c4"/><path d="M3.900 8.300l3.100 2.700 5-5.600" fill="none" stroke="#fff" stroke-width="1.500" stroke-linecap="round" stroke-linejoin="round"/></svg>
<svg class="abs" style="left:30px;top:285px" width="24" height="14" viewBox="0 0 24 14" shape-rendering="crispEdges"><rect x="0" y="0" width="24" height="14" fill="#ececee"/><rect x="1" y="1" width="22" height="10" fill="#fafafa"/><rect x="1" y="2" width="21" height="1" fill="#505050"/><rect x="2" y="3" width="1" height="1" fill="#404040"/><rect x="11" y="3" width="4" height="1" fill="#484848"/><rect x="1" y="6" width="22" height="1" fill="#ececee"/><rect x="1" y="8.5" width="22" height="1" fill="#f0f0f2"/><rect x="1" y="10.5" width="22" height="1" fill="#e6e6ea"/></svg>
<div class="t" id="fn4" style="left:59px;top:287.04px;font-size:12px;color:#222;letter-spacing:-0.42px;">0000005.png</div>
<div class="t" id="ft4" style="left:383.79999999999995px;top:287.04px;font-size:12px;color:#222;letter-spacing:-0.3px;width:61.400px;overflow:hidden;padding-bottom:4px;">PNG Image File</div>
<svg class="abs" style="left:7px;top:340.0px" width="16" height="16" viewBox="0 0 16 16"><rect width="16" height="16" rx="3.800" fill="#2152c4"/><path d="M3.900 8.300l3.100 2.700 5-5.600" fill="none" stroke="#fff" stroke-width="1.500" stroke-linecap="round" stroke-linejoin="round"/></svg>
<svg class="abs" style="left:37px;top:336px" width="10" height="24" viewBox="0 0 10 24" shape-rendering="crispEdges"><rect x="0" y="2" width="10" height="22" fill="#1e1c1d"/><rect x="0" y="0" width="1" height="1" fill="#4090e0"/><rect x="1" y="2" width="1" height="1" fill="#e0e0e0"/><rect x="2" y="10" width="1" height="1" fill="#707070"/><rect x="2" y="14" width="1" height="1" fill="#c0b0d0"/><rect x="4" y="17" width="1" height="1" fill="#606060"/><rect x="6" y="17" width="2" height="1" fill="#d0c8e0"/><rect x="7" y="20" width="1" height="1" fill="#909090"/><rect x="3" y="22" width="1" height="1" fill="#d0d0d0"/><rect x="5" y="22" width="1" height="1" fill="#f01010"/></svg>
<div class="t" id="fn5" style="left:59px;top:343.04px;font-size:12px;color:#222;letter-spacing:-0.42px;">0000006.png</div>
<div class="t" id="ft5" style="left:383.79999999999995px;top:343.04px;font-size:12px;color:#222;letter-spacing:-0.3px;width:61.400px;overflow:hidden;padding-bottom:4px;">PNG Image File</div>
<svg class="abs" style="left:7px;top:396.0px" width="16" height="16" viewBox="0 0 16 16"><rect width="16" height="16" rx="3.800" fill="#12398f"/><path d="M3.900 8.300l3.100 2.700 5-5.600" fill="none" stroke="#fff" stroke-width="1.500" stroke-linecap="round" stroke-linejoin="round"/></svg>
<svg class="abs" style="left:30px;top:401px" width="24" height="6" viewBox="0 0 24 6" shape-rendering="crispEdges"><rect x="0" y="0" width="24" height="6" fill="#ffffff"/><rect x="23" y="1" width="1" height="1" fill="#f03030"/></svg>
<div class="t" id="fn6" style="left:59px;top:399.04px;font-size:12px;color:#222;letter-spacing:-0.42px;">0000007.png</div>
<div class="t" id="ft6" style="left:383.79999999999995px;top:399.04px;font-size:12px;color:#222;letter-spacing:-0.3px;width:61.400px;overflow:hidden;padding-bottom:4px;">PNG Image File</div>
<svg class="abs" style="left:7px;top:452.0px" width="16" height="16" viewBox="0 0 16 16"><rect width="16" height="16" rx="3.800" fill="#12398f"/><path d="M3.900 8.300l3.100 2.700 5-5.600" fill="none" stroke="#fff" stroke-width="1.500" stroke-linecap="round" stroke-linejoin="round"/></svg>
<svg class="abs" style="left:36px;top:448px" width="13" height="24" viewBox="0 0 13 24" shape-rendering="crispEdges"><rect x="0" y="0" width="13" height="24" fill="#ffffff"/><rect x="1" y="2" width="2" height="1" fill="#c8d0f4"/><rect x="4" y="2" width="3" height="1" fill="#2050b0"/><rect x="8" y="2" width="1" height="1" fill="#2050b0"/><rect x="6" y="5" width="1" height="5" fill="#1080e0"/><rect x="2" y="9" width="5" height="1" fill="#1080e0"/><rect x="1" y="8" width="1" height="1" fill="#1080e0"/><rect x="11" y="5" width="1" height="3" fill="#1080e0"/><rect x="3" y="12" width="1" height="1" fill="#1080e0"/><rect x="4" y="13" width="1" height="1" fill="#1080e0"/></svg>
<div class="t" id="fn7" style="left:59px;top:455.04px;font-size:12px;color:#222;letter-spacing:-0.42px;">0000059.png</div>
<div class="t" id="ft7" style="left:383.79999999999995px;top:455.04px;font-size:12px;color:#222;letter-spacing:-0.3px;width:61.400px;overflow:hidden;padding-bottom:4px;">PNG Image File</div>
<svg class="abs" style="left:7px;top:508.0px" width="16" height="16" viewBox="0 0 16 16"><rect width="16" height="16" rx="3.800" fill="#2152c4"/><path d="M3.900 8.300l3.100 2.700 5-5.600" fill="none" stroke="#fff" stroke-width="1.500" stroke-linecap="round" stroke-linejoin="round"/></svg>
<svg class="abs" style="left:30px;top:510px" width="24" height="13" viewBox="0 0 24 13" shape-rendering="crispEdges"><rect x="0" y="0" width="3" height="1" fill="#f0a030"/><rect x="3" y="0" width="1" height="1" fill="#fff4b4"/><rect x="4" y="0" width="5" height="1" fill="#25255a"/><rect x="9" y="0" width="9" height="1" fill="#fff4b4"/><rect x="18" y="0" width="1" height="1" fill="#1a1a20"/><rect x="19" y="0" width="1" height="1" fill="#ffffff"/><rect x="20" y="0" width="4" height="1" fill="#f0a030"/><rect x="0" y="1" width="3" height="1" fill="#f0a030"/><rect x="3" y="1" width="4" height="1" fill="#25255a"/><rect x="7" y="1" width="1" height="1" fill="#f0a030"/><rect x="8" y="1" width="12" height="1" fill="#fff4b4"/><rect x="20" y="1" width="4" height="1" fill="#f0a030"/><rect x="0" y="2" width="3" height="1" fill="#f0a030"/><rect x="3" y="2" width="1" height="1" fill="#fff4b4"/><rect x="4" y="2" width="1" height="1" fill="#ffffff"/><rect x="5" y="2" width="1" height="1" fill="#fff4b4"/><rect x="6" y="2" width="1" height="1" fill="#f0a030"/><rect x="7" y="2" width="1" height="1" fill="#ffffff"/><rect x="8" y="2" width="2" height="1" fill="#fff4b4"/><rect x="10" y="2" width="1" height="1" fill="#1a1a20"/><rect x="11" y="2" width="4" height="1" fill="#fff4b4"/><rect x="15" y="2" width="2" height="1" fill="#1a1a20"/><rect x="17" y="2" width="3" height="1" fill="#fff4b4"/><rect x="20" y="2" width="4" height="1" fill="#f0a030"/><rect x="0" y="3" width="3" height="1" fill="#f0a030"/><rect x="3" y="3" width="2" height="1" fill="#ffffff"/><rect x="5" y="3" width="1" height="1" fill="#fff4b4"/><rect x="6" y="3" width="1" height="1" fill="#f0a030"/><rect x="7" y="3" width="1" height="1" fill="#1a1a20"/><rect x="8" y="3" width="2" height="1" fill="#fff4b4"/><rect x="10" y="3" width="1" height="1" fill="#1a1a20"/><rect x="11" y="3" width="2" height="1" fill="#a888c8"/><rect x="13" y="3" width="3" height="1" fill="#fff4b4"/><rect x="16" y="3" width="1" height="1" fill="#1a1a20"/><rect x="17" y="3" width="2" height="1" fill="#fff4b4"/><rect x="19" y="3" width="2" height="1" fill="#ffffff"/><rect x="21" y="3" width="3" height="1" fill="#f0a030"/><rect x="0" y="4" width="3" height="1" fill="#f0a030"/><rect x="3" y="4" width="2" height="1" fill="#fff4b4"/><rect x="5" y="4" width="1" height="1" fill="#1a1a20"/><rect x="6" y="4" width="1" height="1" fill="#f0a030"/><rect x="7" y="4" width="1" height="1" fill="#1a1a20"/><rect x="8" y="4" width="2" height="1" fill="#fff4b4"/><rect x="10" y="4" width="1" height="1" fill="#a888c8"/><rect x="11" y="4" width="5" height="1" fill="#fff4b4"/><rect x="16" y="4" width="1" height="1" fill="#1a1a20"/><rect x="17" y="4" width="2" height="1" fill="#fff4b4"/><rect x="19" y="4" width="2" height="1" fill="#1a1a20"/><rect x="21" y="4" width="3" height="1" fill="#f0a030"/><rect x="0" y="5" width="3" height="1" fill="#f0a030"/><rect x="3" y="5" width="1" height="1" fill="#ffffff"/><rect x="4" y="5" width="1" height="1" fill="#fff4b4"/><rect x="5" y="5" width="2" height="1" fill="#f0a030"/><rect x="7" y="5" width="1" height="1" fill="#1a1a20"/><rect x="8" y="5" width="2" height="1" fill="#fff4b4"/><rect x="10" y="5" width="1" height="1" fill="#a888c8"/><rect x="11" y="5" width="3" height="1" fill="#fff4b4"/><rect x="14" y="5" width="1" height="1" fill="#1a1a20"/><rect x="15" y="5" width="1" height="1" fill="#fff4b4"/><rect x="16" y="5" width="2" height="1" fill="#1a1a20"/><rect x="18" y="5" width="1" height="1" fill="#fff4b4"/><rect x="19" y="5" width="1" height="1" fill="#f0a030"/><rect x="20" y="5" width="1" height="1" fill="#fff4b4"/><rect x="21" y="5" width="3" height="1" fill="#f0a030"/><rect x="0" y="6" width="3" height="1" fill="#f0a030"/><rect x="3" y="6" width="1" height="1" fill="#1a1a20"/><rect x="4" y="6" width="1" height="1" fill="#fff4b4"/><rect x="5" y="6" width="1" height="1" fill="#f0a030"/><rect x="6" y="6" width="1" height="1" fill="#fff4b4"/><rect x="7" y="6" width="1" height="1" fill="#1a1a20"/><rect x="8" y="6" width="1" height="1" fill="#fff4b4"/><rect x="9" y="6" width="1" height="1" fill="#1a1a20"/><rect x="10" y="6" width="2" height="1" fill="#fff4b4"/><rect x="12" y="6" width="1" height="1" fill="#1a1a20"/><rect x="13" y="6" width="2" height="1" fill="#fff4b4"/><rect x="15" y="6" width="1" height="1" fill="#1a1a20"/><rect x="16" y="6" width="1" height="1" fill="#fff4b4"/><rect x="17" y="6" width="3" height="1" fill="#f0a030"/><rect x="20" y="6" width="1" height="1" fill="#fff4b4"/><rect x="21" y="6" width="3" height="1" fill="#f0a030"/><rect x="0" y="7" width="3" height="1" fill="#f0a030"/><rect x="3" y="7" width="1" height="1" fill="#fff4b4"/><rect x="4" y="7" width="1" height="1" fill="#1a1a20"/><rect x="5" y="7" width="1" height="1" fill="#a888c8"/><rect x="6" y="7" width="2" height="1" fill="#f0a030"/><rect x="8" y="7" width="1" height="1" fill="#1a1a20"/><rect x="9" y="7" width="7" height="1" fill="#fff4b4"/><rect x="16" y="7" width="1" height="1" fill="#f8b8c8"/><rect x="17" y="7" width="2" height="1" fill="#f0a030"/><rect x="19" y="7" width="1" height="1" fill="#ffffff"/><rect x="20" y="7" width="1" height="1" fill="#fff4b4"/><rect x="21" y="7" width="3" height="1" fill="#f0a030"/><rect x="0" y="8" width="3" height="1" fill="#f0a030"/><rect x="3" y="8" width="1" height="1" fill="#fff4b4"/><rect x="4" y="8" width="1" height="1" fill="#f0a030"/><rect x="5" y="8" width="1" height="1" fill="#a888c8"/><rect x="6" y="8" width="2" height="1" fill="#f0a030"/><rect x="8" y="8" width="1" height="1" fill="#1a1a20"/><rect x="9" y="8" width="4" height="1" fill="#fff4b4"/><rect x="13" y="8" width="1" height="1" fill="#f8b8c8"/><rect x="14" y="8" width="3" height="1" fill="#fff4b4"/><rect x="17" y="8" width="1" height="1" fill="#1a1a20"/><rect x="18" y="8" width="2" height="1" fill="#f0a030"/><rect x="20" y="8" width="1" height="1" fill="#fff4b4"/><rect x="21" y="8" width="3" height="1" fill="#f0a030"/><rect x="0" y="9" width="3" height="1" fill="#f0a030"/><rect x="3" y="9" width="1" height="1" fill="#fff4b4"/><rect x="4" y="9" width="1" height="1" fill="#f0a030"/><rect x="5" y="9" width="1" height="1" fill="#fff4b4"/><rect x="6" y="9" width="3" height="1" fill="#f0a030"/><rect x="9" y="9" width="1" height="1" fill="#fff4b4"/><rect x="10" y="9" width="1" height="1" fill="#1a1a20"/><rect x="11" y="9" width="3" height="1" fill="#fff4b4"/><rect x="14" y="9" width="1" height="1" fill="#1a1a20"/><rect x="15" y="9" width="2" height="1" fill="#ffffff"/><rect x="17" y="9" width="1" height="1" fill="#1a1a20"/><rect x="18" y="9" width="2" height="1" fill="#f0a030"/><rect x="20" y="9" width="1" height="1" fill="#fff4b4"/><rect x="21" y="9" width="3" height="1" fill="#f0a030"/><rect x="0" y="10" width="1" height="1" fill="#f0a030"/><rect x="1" y="10" width="6" height="1" fill="#ffffff"/><rect x="7" y="10" width="4" height="1" fill="#fff4b4"/><rect x="11" y="10" width="1" height="1" fill="#f0a030"/><rect x="12" y="10" width="1" height="1" fill="#fff4b4"/><rect x="13" y="10" width="6" height="1" fill="#25255a"/><rect x="19" y="10" width="1" height="1" fill="#f0a030"/><rect x="20" y="10" width="1" height="1" fill="#fff4b4"/><rect x="21" y="10" width="3" height="1" fill="#f0a030"/><rect x="0" y="11" width="1" height="1" fill="#f0a030"/><rect x="1" y="11" width="2" height="1" fill="#1a1a20"/><rect x="3" y="11" width="3" height="1" fill="#ffffff"/><rect x="6" y="11" width="1" height="1" fill="#1a1a20"/><rect x="7" y="11" width="3" height="1" fill="#ffffff"/><rect x="10" y="11" width="1" height="1" fill="#fff4b4"/><rect x="11" y="11" width="1" height="1" fill="#f0a030"/><rect x="12" y="11" width="1" height="1" fill="#fff4b4"/><rect x="13" y="11" width="5" height="1" fill="#25255a"/><rect x="18" y="11" width="1" height="1" fill="#f8b8c8"/><rect x="19" y="11" width="1" height="1" fill="#f0a030"/><rect x="20" y="11" width="1" height="1" fill="#fff4b4"/><rect x="21" y="11" width="3" height="1" fill="#f0a030"/><rect x="0" y="12" width="3" height="1" fill="#f0a030"/><rect x="3" y="12" width="1" height="1" fill="#ffffff"/><rect x="4" y="12" width="1" height="1" fill="#1a1a20"/><rect x="5" y="12" width="2" height="1" fill="#ffffff"/><rect x="7" y="12" width="2" height="1" fill="#f0a030"/><rect x="9" y="12" width="3" height="1" fill="#fff4b4"/><rect x="12" y="12" width="1" height="1" fill="#1a1a20"/><rect x="13" y="12" width="1" height="1" fill="#f0a030"/><rect x="14" y="12" width="2" height="1" fill="#1a1a20"/><rect x="16" y="12" width="1" height="1" fill="#f0a030"/><rect x="17" y="12" width="1" height="1" fill="#fff4b4"/><rect x="18" y="12" width="1" height="1" fill="#ffffff"/><rect x="19" y="12" width="2" height="1" fill="#fff4b4"/><rect x="21" y="12" width="3" height="1" fill="#f0a030"/></svg>
<div class="t" id="fn8" style="left:59px;top:511.04px;font-size:12px;color:#222;letter-spacing:-0.42px;">0000075.png</div>
<div class="t" id="ft8" style="left:383.79999999999995px;top:511.04px;font-size:12px;color:#222;letter-spacing:-0.3px;width:61.400px;overflow:hidden;padding-bottom:4px;">PNG Image File</div>
<svg class="abs" style="left:7px;top:564.0px" width="16" height="16" viewBox="0 0 16 16"><rect width="16" height="16" rx="3.800" fill="#2152c4"/><path d="M3.900 8.300l3.100 2.700 5-5.600" fill="none" stroke="#fff" stroke-width="1.500" stroke-linecap="round" stroke-linejoin="round"/></svg>
<svg class="abs" style="left:30px;top:566px" width="24" height="13" viewBox="0 0 24 13" shape-rendering="crispEdges"><rect x="0" y="0" width="3" height="1" fill="#f0a030"/><rect x="3" y="0" width="1" height="1" fill="#fff4b4"/><rect x="4" y="0" width="5" height="1" fill="#25255a"/><rect x="9" y="0" width="9" height="1" fill="#fff4b4"/><rect x="18" y="0" width="1" height="1" fill="#1a1a20"/><rect x="19" y="0" width="1" height="1" fill="#ffffff"/><rect x="20" y="0" width="4" height="1" fill="#f0a030"/><rect x="0" y="1" width="3" height="1" fill="#f0a030"/><rect x="3" y="1" width="4" height="1" fill="#25255a"/><rect x="7" y="1" width="1" height="1" fill="#f0a030"/><rect x="8" y="1" width="12" height="1" fill="#fff4b4"/><rect x="20" y="1" width="4" height="1" fill="#f0a030"/><rect x="0" y="2" width="3" height="1" fill="#f0a030"/><rect x="3" y="2" width="1" height="1" fill="#fff4b4"/><rect x="4" y="2" width="1" height="1" fill="#ffffff"/><rect x="5" y="2" width="1" height="1" fill="#fff4b4"/><rect x="6" y="2" width="1" height="1" fill="#f0a030"/><rect x="7" y="2" width="1" height="1" fill="#ffffff"/><rect x="8" y="2" width="2" height="1" fill="#fff4b4"/><rect x="10" y="2" width="1" height="1" fill="#1a1a20"/><rect x="11" y="2" width="4" height="1" fill="#fff4b4"/><rect x="15" y="2" width="2" height="1" fill="#1a1a20"/><rect x="17" y="2" width="3" height="1" fill="#fff4b4"/><rect x="20" y="2" width="4" height="1" fill="#f0a030"/><rect x="0" y="3" width="3" height="1" fill="#f0a030"/><rect x="3" y="3" width="2" height="1" fill="#ffffff"/><rect x="5" y="3" width="1" height="1" fill="#fff4b4"/><rect x="6" y="3" width="1" height="1" fill="#f0a030"/><rect x="7" y="3" width="1" height="1" fill="#1a1a20"/><rect x="8" y="3" width="2" height="1" fill="#fff4b4"/><rect x="10" y="3" width="1" height="1" fill="#1a1a20"/><rect x="11" y="3" width="2" height="1" fill="#a888c8"/><rect x="13" y="3" width="3" height="1" fill="#fff4b4"/><rect x="16" y="3" width="1" height="1" fill="#1a1a20"/><rect x="17" y="3" width="2" height="1" fill="#fff4b4"/><rect x="19" y="3" width="2" height="1" fill="#ffffff"/><rect x="21" y="3" width="3" height="1" fill="#f0a030"/><rect x="0" y="4" width="3" height="1" fill="#f0a030"/><rect x="3" y="4" width="2" height="1" fill="#fff4b4"/><rect x="5" y="4" width="1" height="1" fill="#1a1a20"/><rect x="6" y="4" width="1" height="1" fill="#f0a030"/><rect x="7" y="4" width="1" height="1" fill="#1a1a20"/><rect x="8" y="4" width="2" height="1" fill="#fff4b4"/><rect x="10" y="4" width="1" height="1" fill="#a888c8"/><rect x="11" y="4" width="5" height="1" fill="#fff4b4"/><rect x="16" y="4" width="1" height="1" fill="#1a1a20"/><rect x="17" y="4" width="2" height="1" fill="#fff4b4"/><rect x="19" y="4" width="2" height="1" fill="#1a1a20"/><rect x="21" y="4" width="3" height="1" fill="#f0a030"/><rect x="0" y="5" width="3" height="1" fill="#f0a030"/><rect x="3" y="5" width="1" height="1" fill="#ffffff"/><rect x="4" y="5" width="1" height="1" fill="#fff4b4"/><rect x="5" y="5" width="2" height="1" fill="#f0a030"/><rect x="7" y="5" width="1" height="1" fill="#1a1a20"/><rect x="8" y="5" width="2" height="1" fill="#fff4b4"/><rect x="10" y="5" width="1" height="1" fill="#a888c8"/><rect x="11" y="5" width="3" height="1" fill="#fff4b4"/><rect x="14" y="5" width="1" height="1" fill="#1a1a20"/><rect x="15" y="5" width="1" height="1" fill="#fff4b4"/><rect x="16" y="5" width="2" height="1" fill="#1a1a20"/><rect x="18" y="5" width="1" height="1" fill="#fff4b4"/><rect x="19" y="5" width="1" height="1" fill="#f0a030"/><rect x="20" y="5" width="1" height="1" fill="#fff4b4"/><rect x="21" y="5" width="3" height="1" fill="#f0a030"/><rect x="0" y="6" width="3" height="1" fill="#f0a030"/><rect x="3" y="6" width="1" height="1" fill="#1a1a20"/><rect x="4" y="6" width="1" height="1" fill="#fff4b4"/><rect x="5" y="6" width="1" height="1" fill="#f0a030"/><rect x="6" y="6" width="1" height="1" fill="#fff4b4"/><rect x="7" y="6" width="1" height="1" fill="#1a1a20"/><rect x="8" y="6" width="1" height="1" fill="#fff4b4"/><rect x="9" y="6" width="1" height="1" fill="#1a1a20"/><rect x="10" y="6" width="2" height="1" fill="#fff4b4"/><rect x="12" y="6" width="1" height="1" fill="#1a1a20"/><rect x="13" y="6" width="2" height="1" fill="#fff4b4"/><rect x="15" y="6" width="1" height="1" fill="#1a1a20"/><rect x="16" y="6" width="1" height="1" fill="#fff4b4"/><rect x="17" y="6" width="3" height="1" fill="#f0a030"/><rect x="20" y="6" width="1" height="1" fill="#fff4b4"/><rect x="21" y="6" width="3" height="1" fill="#f0a030"/><rect x="0" y="7" width="3" height="1" fill="#f0a030"/><rect x="3" y="7" width="1" height="1" fill="#fff4b4"/><rect x="4" y="7" width="1" height="1" fill="#1a1a20"/><rect x="5" y="7" width="1" height="1" fill="#a888c8"/><rect x="6" y="7" width="2" height="1" fill="#f0a030"/><rect x="8" y="7" width="1" height="1" fill="#1a1a20"/><rect x="9" y="7" width="7" height="1" fill="#fff4b4"/><rect x="16" y="7" width="1" height="1" fill="#f8b8c8"/><rect x="17" y="7" width="2" height="1" fill="#f0a030"/><rect x="19" y="7" width="1" height="1" fill="#ffffff"/><rect x="20" y="7" width="1" height="1" fill="#fff4b4"/><rect x="21" y="7" width="3" height="1" fill="#f0a030"/><rect x="0" y="8" width="3" height="1" fill="#f0a030"/><rect x="3" y="8" width="1" height="1" fill="#fff4b4"/><rect x="4" y="8" width="1" height="1" fill="#f0a030"/><rect x="5" y="8" width="1" height="1" fill="#a888c8"/><rect x="6" y="8" width="2" height="1" fill="#f0a030"/><rect x="8" y="8" width="1" height="1" fill="#1a1a20"/><rect x="9" y="8" width="4" height="1" fill="#fff4b4"/><rect x="13" y="8" width="1" height="1" fill="#f8b8c8"/><rect x="14" y="8" width="3" height="1" fill="#fff4b4"/><rect x="17" y="8" width="1" height="1" fill="#1a1a20"/><rect x="18" y="8" width="2" height="1" fill="#f0a030"/><rect x="20" y="8" width="1" height="1" fill="#fff4b4"/><rect x="21" y="8" width="3" height="1" fill="#f0a030"/><rect x="0" y="9" width="3" height="1" fill="#f0a030"/><rect x="3" y="9" width="1" height="1" fill="#fff4b4"/><rect x="4" y="9" width="1" height="1" fill="#f0a030"/><rect x="5" y="9" width="1" height="1" fill="#fff4b4"/><rect x="6" y="9" width="3" height="1" fill="#f0a030"/><rect x="9" y="9" width="1" height="1" fill="#fff4b4"/><rect x="10" y="9" width="1" height="1" fill="#1a1a20"/><rect x="11" y="9" width="3" height="1" fill="#fff4b4"/><rect x="14" y="9" width="1" height="1" fill="#1a1a20"/><rect x="15" y="9" width="2" height="1" fill="#ffffff"/><rect x="17" y="9" width="1" height="1" fill="#1a1a20"/><rect x="18" y="9" width="2" height="1" fill="#f0a030"/><rect x="20" y="9" width="1" height="1" fill="#fff4b4"/><rect x="21" y="9" width="3" height="1" fill="#f0a030"/><rect x="0" y="10" width="1" height="1" fill="#f0a030"/><rect x="1" y="10" width="6" height="1" fill="#ffffff"/><rect x="7" y="10" width="4" height="1" fill="#fff4b4"/><rect x="11" y="10" width="1" height="1" fill="#f0a030"/><rect x="12" y="10" width="1" height="1" fill="#fff4b4"/><rect x="13" y="10" width="6" height="1" fill="#25255a"/><rect x="19" y="10" width="1" height="1" fill="#f0a030"/><rect x="20" y="10" width="1" height="1" fill="#fff4b4"/><rect x="21" y="10" width="3" height="1" fill="#f0a030"/><rect x="0" y="11" width="1" height="1" fill="#f0a030"/><rect x="1" y="11" width="2" height="1" fill="#1a1a20"/><rect x="3" y="11" width="3" height="1" fill="#ffffff"/><rect x="6" y="11" width="1" height="1" fill="#1a1a20"/><rect x="7" y="11" width="3" height="1" fill="#ffffff"/><rect x="10" y="11" width="1" height="1" fill="#fff4b4"/><rect x="11" y="11" width="1" height="1" fill="#f0a030"/><rect x="12" y="11" width="1" height="1" fill="#fff4b4"/><rect x="13" y="11" width="5" height="1" fill="#25255a"/><rect x="18" y="11" width="1" height="1" fill="#f8b8c8"/><rect x="19" y="11" width="1" height="1" fill="#f0a030"/><rect x="20" y="11" width="1" height="1" fill="#fff4b4"/><rect x="21" y="11" width="3" height="1" fill="#f0a030"/><rect x="0" y="12" width="3" height="1" fill="#f0a030"/><rect x="3" y="12" width="1" height="1" fill="#ffffff"/><rect x="4" y="12" width="1" height="1" fill="#1a1a20"/><rect x="5" y="12" width="2" height="1" fill="#ffffff"/><rect x="7" y="12" width="2" height="1" fill="#f0a030"/><rect x="9" y="12" width="3" height="1" fill="#fff4b4"/><rect x="12" y="12" width="1" height="1" fill="#1a1a20"/><rect x="13" y="12" width="1" height="1" fill="#f0a030"/><rect x="14" y="12" width="2" height="1" fill="#1a1a20"/><rect x="16" y="12" width="1" height="1" fill="#f0a030"/><rect x="17" y="12" width="1" height="1" fill="#fff4b4"/><rect x="18" y="12" width="1" height="1" fill="#ffffff"/><rect x="19" y="12" width="2" height="1" fill="#fff4b4"/><rect x="21" y="12" width="3" height="1" fill="#f0a030"/></svg>
<div class="t" id="fn9" style="left:59px;top:567.04px;font-size:12px;color:#222;letter-spacing:-0.42px;">0000076.png</div>
<div class="t" id="ft9" style="left:383.79999999999995px;top:567.04px;font-size:12px;color:#222;letter-spacing:-0.3px;width:61.400px;overflow:hidden;padding-bottom:4px;">PNG Image File</div>
</div>
<div id="right">
<svg class="abs" style="left:78px;top:63px" width="166" height="166" viewBox="0 0 166 166"><defs><linearGradient id="pg" x1="0" y1="0" x2="0" y2="1"><stop offset="0" stop-color="#c8e1ff"/><stop offset="1" stop-color="#afd2fd"/></linearGradient><clipPath id="pc"><rect width="166" height="166" rx="16"/></clipPath></defs><rect width="166" height="166" rx="16" fill="url(#pg)"/><g clip-path="url(#pc)"><path d="M-2 112 L43 67 Q54 57 65 67 L168 170 L-2 170z" fill="#8abcff"/></g><circle cx="120" cy="46" r="18.500" fill="#fff"/></svg>
<svg class="abs" style="left:1px;top:319px" width="8" height="10" viewBox="0 0 8 10" fill="none" stroke="#6c70a4" stroke-width="2" stroke-linecap="round" stroke-linejoin="round"><path d="M1.700 1.400 5.600 5 1.700 8.600"/></svg>
<div class="abs" style="left:116px;top:300px;width:106px;height:28px;border:1px solid #d2d2d4;border-radius:4px;background:#fff"></div>
<svg class="abs" style="left:133px;top:308px" width="17" height="12" viewBox="0 0 17 12"><path d="M.2 6Q4 .3 8.500 .3T16.800 6Q13 11.700 8.500 11.700T.2 6z" fill="#26262a"/><circle cx="8.400" cy="5.700" r="3" fill="#fff"/></svg>
<div class="t" id="prev" style="left:154px;top:308.00px;font-size:13px;color:#222;font-weight:bold;letter-spacing:-0.15px;">Preview</div>
<div class="t" id="pname" style="left:126px;top:354.98px;font-size:14.2px;color:#3c3c3c;font-weight:bold;">0000242.png</div>
<div class="t" id="pl0" style="left:31.00000000000002px;top:398.15px;font-size:14px;color:#767676;">Date modified :</div>
<div class="t" id="pl1" style="left:31.00000000000002px;top:434.00px;font-size:13px;color:#767676;">Type :</div>
<div class="t" id="pv1" style="right:17px;top:433.83px;font-size:13.2px;color:#767676;">PNG Image File</div>
<div class="t" id="pl2" style="left:31.00000000000002px;top:469.93px;font-size:12.6px;color:#767676;">Size :</div>
<div class="t" id="pv2" style="right:17px;top:469.43px;font-size:13.2px;color:#767676;">46.2 KB</div>
</div>
<div id="foot">
<svg class="abs" style="left:33px;top:21px" width="48" height="48" viewBox="0 0 48 48"><defs><linearGradient id="gg" x1="0" y1="0" x2=".3" y2="1"><stop offset="0" stop-color="#70cf56"/><stop offset="1" stop-color="#92dc78"/></linearGradient></defs><circle cx="24" cy="24" r="24" fill="url(#gg)"/><path d="M15.400 25.200l6.800 5.600 10.400-11.600" fill="none" stroke="#fff" stroke-width="3.600" stroke-linecap="round" stroke-linejoin="round"/></svg>
<div class="t" id="scan" style="left:97.3px;top:37.68px;font-size:15.5px;color:#1f1f22;font-weight:bold;letter-spacing:0.2px;">Scan completed. Found 1586 files <span style="color:#2355c4">(145 MB)</span></div>
<div class="t" id="sel" style="left:609.5px;top:38.13px;font-size:15.2px;color:#2b2b2e;">selected: 258 files <span style="color:#2f62cf">(9.87 MB)</span></div>
<div class="abs" style="left:826px;top:21px;width:165px;height:48px;border-radius:5px;background:#2053c3"></div>
<div class="t" id="rec" style="left:826px;top:37.61px;font-size:17px;color:#fff;font-weight:bold;width:165px;text-align:center;">Recover</div>
<svg class="abs" style="left:814px;top:10px" width="192" height="72" viewBox="0 0 192 72"><rect x="4.500" y="4.500" width="181.500" height="61" fill="none" stroke="#ff2222" stroke-width="3" stroke-linecap="round" stroke-dasharray="6 6" stroke-dashoffset="-2"/></svg>
</div>
<div id="win"></div>
</body></html>
